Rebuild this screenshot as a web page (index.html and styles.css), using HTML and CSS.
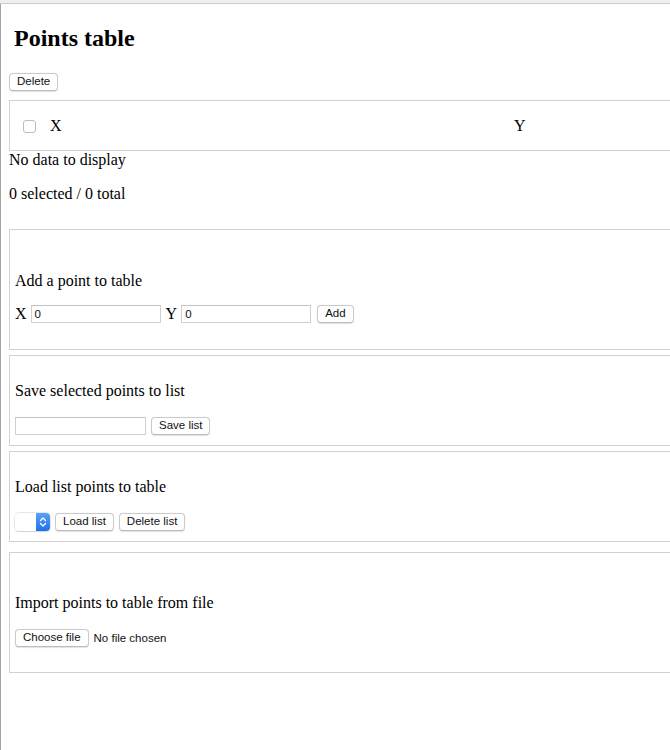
FILE: index.html
```html
<!DOCTYPE html>
<html>
<head>
<meta charset="utf-8">
<title>Points table</title>
<link rel="stylesheet" href="styles.css">
</head>
<body>
<div class="topbar"></div>
<div class="frame">
  <h2 class="title">Points table</h2>
  <div class="toolbar">
    <button class="btn">Delete</button>
  </div>
  <div class="table">
    <div class="thead">
      <span class="cell-check"><span class="checkbox"></span></span>
      <span class="cell-x">X</span>
      <span class="cell-y">Y</span>
    </div>
  </div>
  <p class="nodata">No data to display</p>
  <p class="count">0 selected / 0 total</p>

  <div class="box box-tall box-first">
    <div class="box-title">Add a point to table</div>
    <div class="controls controls-tight">
      <span class="lbl">X</span>
      <span class="input">0</span>
      <span class="lbl lbl-y">Y</span>
      <span class="input">0</span>
      <button class="btn btn-add">Add</button>
    </div>
  </div>

  <div class="box box-short">
    <div class="box-title">Save selected points to list</div>
    <div class="controls">
      <span class="input input-wide"></span>
      <button class="btn">Save list</button>
    </div>
  </div>

  <div class="box box-short">
    <div class="box-title">Load list points to table</div>
    <div class="controls">
      <span class="select">
        <span class="select-face"></span>
        <span class="select-arrow">
          <svg width="14" height="18" viewBox="0 0 14 18"><path d="M4.5 7.5 L7 5 L9.5 7.5 M4.5 10.5 L7 13 L9.5 10.5" fill="none" stroke="#ffffff" stroke-width="1.3" stroke-linecap="round" stroke-linejoin="round"/></svg>
        </span>
      </span>
      <button class="btn">Load list</button>
      <button class="btn">Delete list</button>
    </div>
  </div>

  <div class="box box-tall box-last">
    <div class="box-title">Import points to table from file</div>
    <div class="controls">
      <button class="btn">Choose file</button>
      <span class="filename">No file chosen</span>
    </div>
  </div>
</div>
</body>
</html>
```

FILE: styles.css
```css
html, body {
  margin: 0;
  padding: 0;
  overflow: hidden;
  background: #ffffff;
}

body {
  font-family: "Liberation Serif", "Times New Roman", serif;
  font-size: 16px;
  color: #000000;
}

.topbar {
  height: 3px;
  background: #efefef;
  border-bottom: 1px solid #cdcdcd;
}

.frame {
  display: flow-root;
  border-left: 1px solid #a3a3a3;
  padding: 0 0 0 8px;
  width: 1000px;
  min-height: 746px;
  box-sizing: border-box;
}

.title {
  font-size: 24px;
  line-height: 28px;
  font-weight: bold;
  margin: 20px 0 21px 5px;
}

.toolbar {
  display: flex;
  height: 18px;
}

.btn {
  display: inline-flex;
  align-items: center;
  justify-content: center;
  box-sizing: border-box;
  height: 18px;
  padding: 0 7px;
  margin: 0;
  background: #ffffff;
  border: 1px solid #cbcbcb;
  border-bottom-color: #bcbcbc;
  border-radius: 4px;
  box-shadow: 0 0.5px 1px rgba(0, 0, 0, 0.12);
  font-family: "Liberation Sans", Arial, sans-serif;
  font-size: 11.5px;
  color: #111111;
  line-height: 1;
}

.table {
  margin-top: 9px;
  border: 1px solid #d2d2d2;
  padding: 16px 0 15px 0;
}

.thead {
  display: flex;
  align-items: center;
  height: 18px;
  line-height: 18px;
}

.cell-check {
  display: flex;
  align-items: center;
  padding-left: 13px;
  width: 27px;
}

.checkbox {
  display: block;
  width: 11px;
  height: 11px;
  border: 1px solid #bdbdbd;
  border-radius: 3px;
  background: #ffffff;
}

.cell-x {
  width: 464px;
}

.nodata {
  margin: 0;
  line-height: 18px;
}

.count {
  margin: 16px 0 26px 0;
  line-height: 18px;
}

.box {
  border: 1px solid #d2d2d2;
  padding-left: 5px;
}

.box-tall {
  padding-top: 42px;
  padding-bottom: 25px;
}

.box-last {
  padding-top: 41px;
}

.box-short {
  padding-top: 26px;
  padding-bottom: 10px;
}

.box + .box {
  margin-top: 5px;
}

.box + .box-last {
  margin-top: 10px;
}

.box-title {
  line-height: 18px;
}

.controls {
  display: flex;
  align-items: center;
  gap: 5px;
  height: 18px;
  margin-top: 17px;
}

.controls-tight {
  margin-top: 15px;
  gap: 0;
}

.box-first {
  padding-bottom: 26px;
}

.lbl {
  line-height: 18px;
  margin-right: 4px;
}

.lbl-y {
  margin-left: 5px;
}

.btn-add {
  margin-left: 6px;
}

.input {
  display: inline-flex;
  align-items: center;
  box-sizing: border-box;
  width: 130px;
  height: 18px;
  padding-left: 3px;
  border: 1px solid #d0d0d0;
  border-top-color: #c4c4c4;
  background: #ffffff;
  font-family: "Liberation Sans", Arial, sans-serif;
  font-size: 11.5px;
  color: #111111;
}

.input-wide {
  width: 131px;
}

.select {
  display: inline-flex;
  width: 35px;
  height: 18px;
  box-sizing: border-box;
  border-radius: 4px;
  overflow: hidden;
  box-shadow: 0 0 0 0.5px #cfcfcf, 0 0.5px 1px rgba(0, 0, 0, 0.15);
}

.select-face {
  flex: 1;
  background: #ffffff;
}

.select-arrow {
  display: block;
  width: 14px;
  height: 18px;
  background: linear-gradient(#5aa2f8, #1f72e6);
}

.select-arrow svg {
  display: block;
}

.filename {
  font-family: "Liberation Sans", Arial, sans-serif;
  font-size: 11.5px;
  color: #111111;
}
```
